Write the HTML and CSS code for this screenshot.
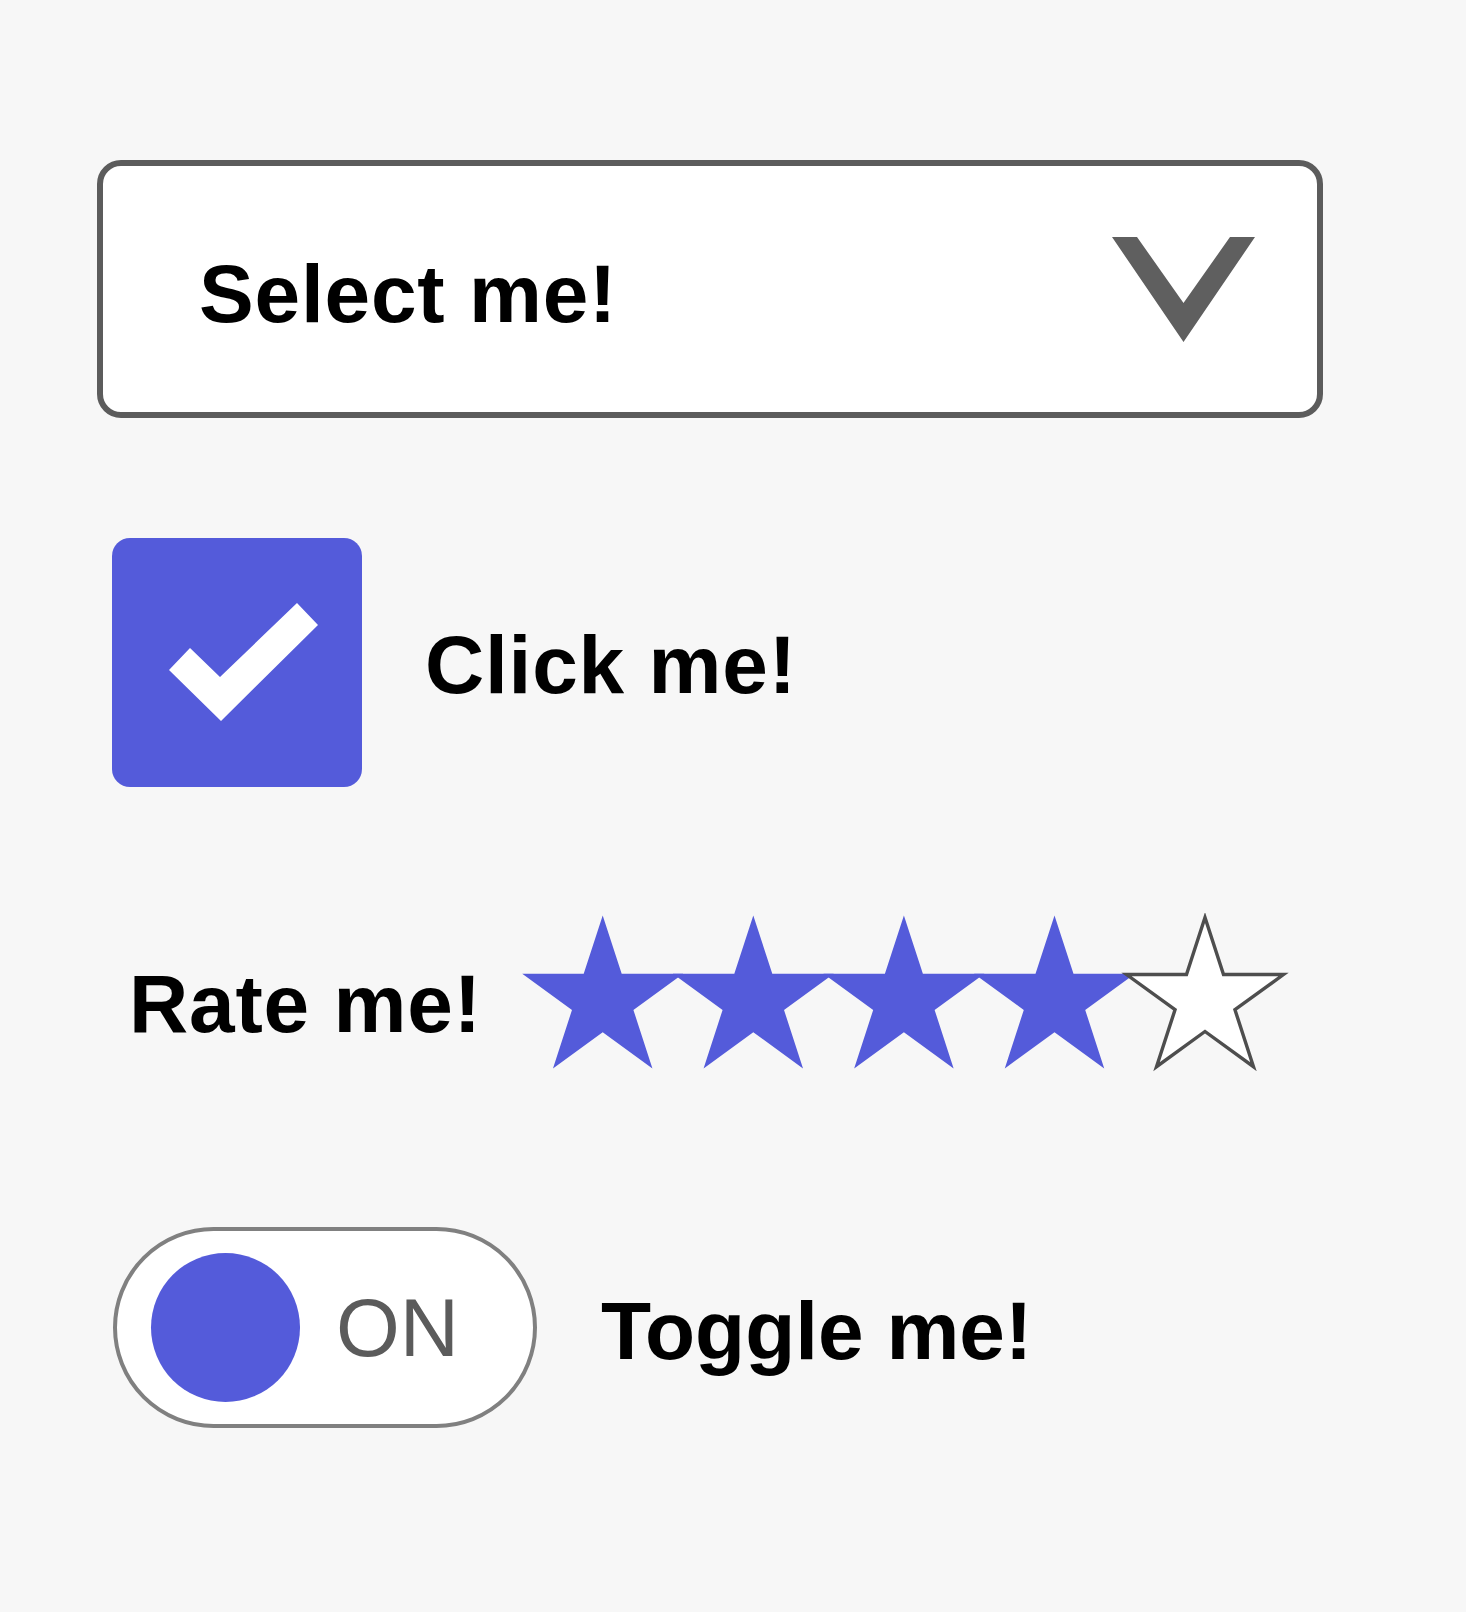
FILE: index.html
```html
<!DOCTYPE html>
<html lang="en">
<head>
<meta charset="utf-8">
<title>Controls</title>
<link rel="stylesheet" href="styles.css">
</head>
<body>
<main class="controls">
  <div class="select">
    <span class="label select-label">Select me!</span>
    <svg class="chevron" width="143" height="105" viewBox="0 0 143 105" aria-hidden="true">
      <polygon points="0,0 25,0 71.5,66 118,0 143,0 71.5,105" fill="#5f5f5f"/>
    </svg>
  </div>

  <div class="check-row">
    <span class="checkbox">
      <svg width="250" height="249" viewBox="0 0 250 249" aria-hidden="true">
        <polygon points="57,132 78,110 108,139 185,65 206,87 109,183" fill="#ffffff"/>
      </svg>
    </span>
    <span class="label check-label">Click me!</span>
  </div>

  <div class="rate-row">
    <span class="label rate-label">Rate me!</span>
    <svg class="stars" width="770" height="174" viewBox="0 0 770 174" aria-hidden="true">
      <defs>
        <polygon id="star" points="0,-84.6 18.99,-26.13 80.46,-26.14 30.72,9.98 49.73,68.44 0,32.3 -49.73,68.44 -30.72,9.98 -80.46,-26.14 -18.99,-26.13"/>
      </defs>
      <use href="#star" transform="translate(82.7 87)" fill="#545bda"/>
      <use href="#star" transform="translate(233.3 87)" fill="#545bda"/>
      <use href="#star" transform="translate(383.9 87)" fill="#545bda"/>
      <use href="#star" transform="translate(534.5 87)" fill="#545bda"/>
      <use href="#star" transform="translate(685 87) scale(0.975)" fill="#ffffff" stroke="#4e4e4e" stroke-width="3.5"/>
    </svg>
  </div>

  <div class="toggle-row">
    <span class="toggle">
      <span class="knob"></span>
      <span class="toggle-text">ON</span>
    </span>
    <span class="label toggle-label">Toggle me!</span>
  </div>
</main>
</body>
</html>
```

FILE: styles.css
```css
html, body {
  margin: 0;
  padding: 0;
  background: #f7f7f7;
}

body {
  font-family: "Liberation Sans", Arial, Helvetica, sans-serif;
  color: #000;
}

.controls {
  display: flex;
  flex-direction: column;
  align-items: flex-start;
  padding-top: 160px;
}

.label {
  font-size: 82px;
  font-weight: 700;
  line-height: 1;
  letter-spacing: 0.8px;
  color: #000;
  white-space: nowrap;
}

/* Select */
.select {
  margin-left: 97px;
  width: 1226px;
  height: 258px;
  box-sizing: border-box;
  border: 6px solid #5c5c5c;
  border-radius: 24px;
  background: #fff;
  display: flex;
  align-items: center;
  justify-content: space-between;
  padding: 0 62px 0 96px;
}

.select-label {
  margin-top: 9px;
}

.chevron {
  display: block;
  flex: none;
}

/* Checkbox */
.check-row {
  margin-top: 120px;
  margin-left: 112px;
  display: flex;
  align-items: center;
  gap: 63px;
}

.checkbox {
  width: 250px;
  height: 249px;
  border-radius: 18px;
  background: #545bda;
  display: block;
  flex: none;
}

.checkbox svg {
  display: block;
}

.check-label {
  margin-top: 5px;
}

/* Rating */
.rate-row {
  margin-top: 126px;
  margin-left: 129px;
  display: flex;
  align-items: center;
  gap: 38px;
}

.rate-label {
  margin-top: 8px;
}

.stars {
  display: block;
  flex: none;
}

/* Toggle */
.toggle-row {
  margin-top: 140px;
  margin-left: 113px;
  display: flex;
  align-items: center;
  gap: 64px;
}

.toggle {
  width: 424px;
  height: 201px;
  box-sizing: border-box;
  border: 4px solid #808080;
  border-radius: 101px;
  background: #fff;
  display: flex;
  align-items: center;
  padding-left: 34px;
  flex: none;
}

.knob {
  width: 149px;
  height: 149px;
  border-radius: 50%;
  background: #545bda;
  flex: none;
}

.toggle-text {
  margin-left: 36px;
  font-size: 82px;
  font-weight: 400;
  line-height: 1;
  color: #5b5b5b;
}

.toggle-label {
  margin-top: 7px;
  letter-spacing: 0;
}
```
